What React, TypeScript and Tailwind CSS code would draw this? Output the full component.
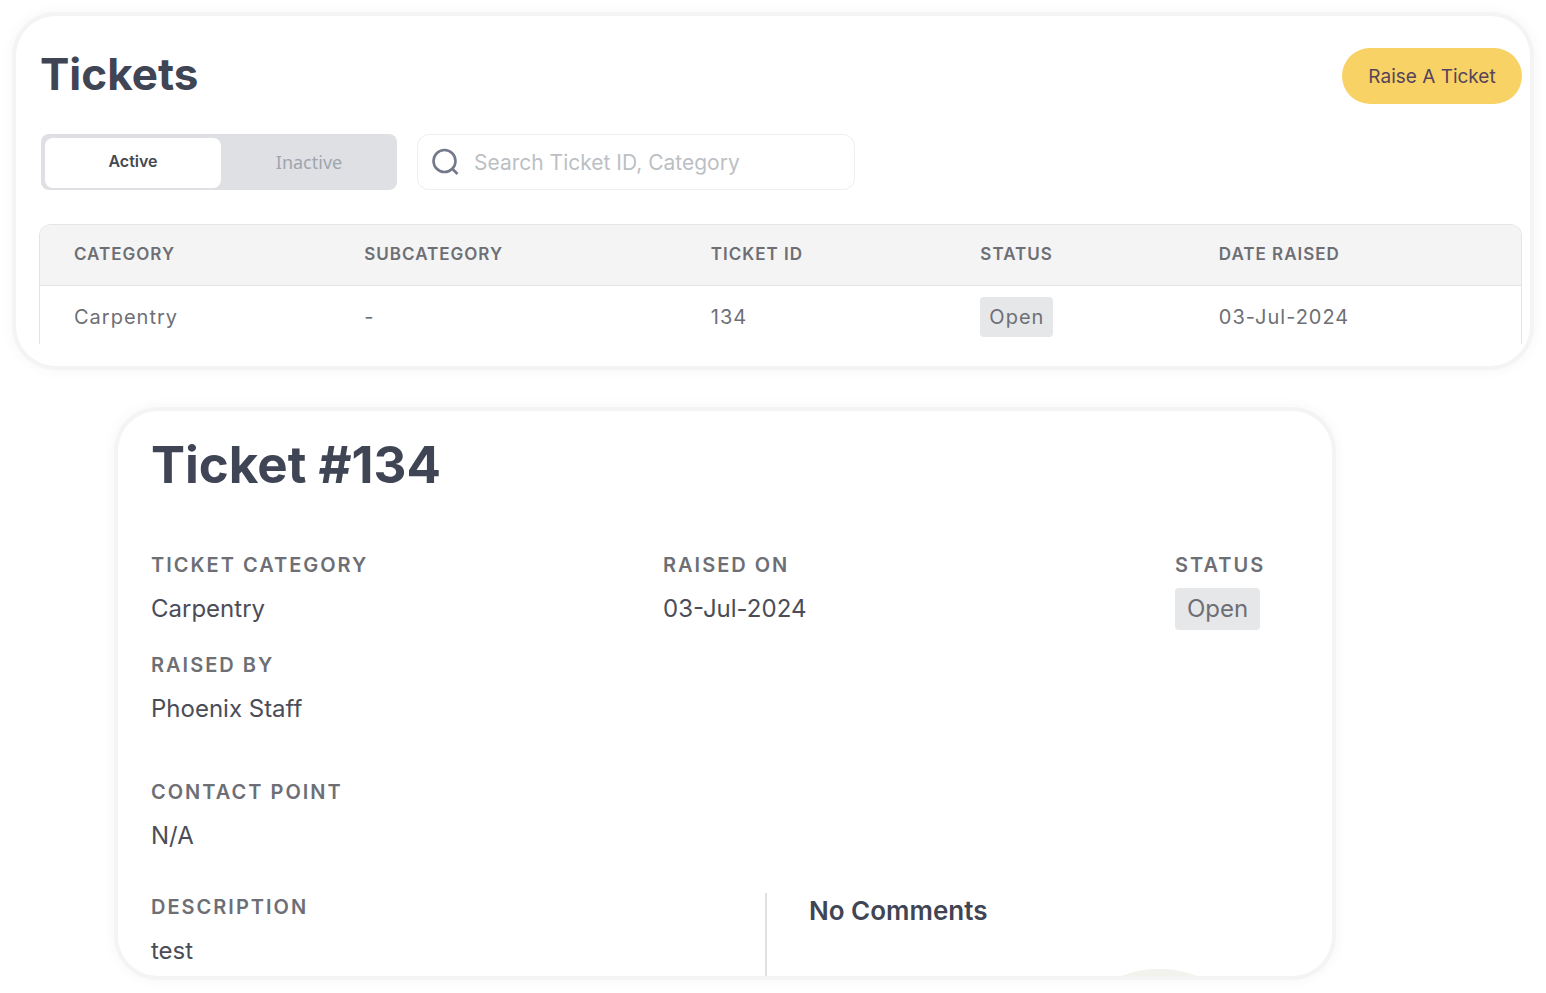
import { ReactNode, useState } from 'react';

const cardClass =
  'rounded-[40px] bg-white shadow-[0_0_0_4px_#f4f4f4,0_0_12px_6px_rgba(0,0,0,0.03)]';

const columns = [
  { label: 'Category', width: 'w-[19.6%]' },
  { label: 'Subcategory', width: 'w-[23.4%]' },
  { label: 'Ticket ID', width: 'w-[18.2%]' },
  { label: 'Status', width: 'w-[16.1%]' },
  { label: 'Date Raised', width: 'w-[22.7%]' },
];

const tickets = [
  { id: '134', category: 'Carpentry', subcategory: '-', status: 'Open', raised: '03-Jul-2024' },
];

function SearchIcon() {
  return (
    <svg
      className="size-7 shrink-0 text-[#73788c]"
      viewBox="0 0 28 28"
      fill="none"
      stroke="currentColor"
      strokeWidth="2.6"
      aria-hidden="true"
    >
      <circle cx="13.5" cy="13" r="11" />
      <path d="M21 20.5 L26.5 26" />
    </svg>
  );
}

function Field({ label, children }: { label: string; children: ReactNode }) {
  return (
    <div>
      <dt className="text-xl leading-7 font-semibold tracking-[2px] text-[#6d6f75] uppercase">
        {label}
      </dt>
      <dd className="mt-[9px] text-2xl leading-[42px] text-[#4a4d57]">{children}</dd>
    </div>
  );
}

function TicketList() {
  const [tab, setTab] = useState<'active' | 'inactive'>('active');

  return (
    <section className={`${cardClass} pt-8 pr-2 pb-[22px] pl-[23px]`}>
      <div className="flex items-start justify-between pl-px">
        <h1 className="text-[44px] leading-[52px] font-bold text-[#3f4554]">Tickets</h1>
        <button
          type="button"
          className="h-14 w-[180px] rounded-full bg-[#f8d264] pt-0.5 text-[19px] text-[#57445a]"
        >
          Raise A Ticket
        </button>
      </div>

      <div className="mt-[30px] flex gap-5 pl-0.5">
        <div className="flex h-14 w-[356px] rounded-lg bg-[#dfe0e4] p-1 pr-0 pb-0.5">
          <button
            type="button"
            onClick={() => setTab('active')}
            aria-pressed={tab === 'active'}
            className="flex-1 rounded-lg bg-white pb-1 text-base font-semibold text-[#454850]"
          >
            Active
          </button>
          <button
            type="button"
            onClick={() => setTab('inactive')}
            aria-pressed={tab === 'inactive'}
            className="flex-1 rounded-lg pb-0.5 font-['Noto_Sans',sans-serif] text-lg text-[#a0a5af]"
          >
            Inactive
          </button>
        </div>
        <label className="flex h-14 w-[438px] items-center gap-[15px] rounded-xl border border-[#e9eff3] px-[13px]">
          <SearchIcon />
          <input
            type="text"
            aria-label="Search tickets"
            placeholder="Search Ticket ID, Category"
            className="min-w-0 flex-1 bg-transparent pt-0.5 text-[21px] text-[#4a4d57] outline-none placeholder:text-[#bcbfc4]"
          />
        </label>
      </div>

      <div className="mt-[34px] overflow-hidden rounded-t-xl border border-b-0 border-[#e2e4e6]">
        <table className="w-full table-fixed text-left">
          <thead className="bg-[#f4f4f4]">
            <tr className="h-[60px] border-b border-[#e2e4e6]">
              {columns.map((column) => (
                <th
                  key={column.label}
                  className={`${column.width} pl-[34px] text-[17px] font-semibold tracking-[1px] text-[#6d6f75] uppercase`}
                >
                  {column.label}
                </th>
              ))}
            </tr>
          </thead>
          <tbody>
            {tickets.map((ticket) => (
              <tr key={ticket.id} className="h-[59px] text-xl tracking-[1px] text-[#6d6f75] [&>td]:pt-1 [&>td]:pl-[34px]">
                <td>{ticket.category}</td>
                <td>{ticket.subcategory}</td>
                <td>{ticket.id}</td>
                <td>
                  <span className="inline-block rounded bg-[#e6e7e9] px-[9px] leading-10">{ticket.status}</span>
                </td>
                <td>{ticket.raised}</td>
              </tr>
            ))}
          </tbody>
        </table>
      </div>
    </section>
  );
}

function TicketDetail() {
  return (
    <section className={`${cardClass} mt-[45px] mr-[198px] ml-[102px] overflow-hidden pt-6 pl-[33px]`}>
      <h2 className="text-[51px] leading-[60px] font-bold text-[#3f4554]">Ticket #134</h2>

      <dl className="mt-14 grid grid-cols-[512fr_512fr_157fr]">
        <Field label="Ticket Category">Carpentry</Field>
        <Field label="Raised On">03-Jul-2024</Field>
        <Field label="Status">
          <span className="inline-block rounded bg-[#e6e7e9] px-3 leading-[42px] text-[#6d6f75]">Open</span>
        </Field>
      </dl>

      <dl className="mt-[21px]">
        <Field label="Raised By">Phoenix Staff</Field>
      </dl>
      <dl className="mt-12">
        <Field label="Contact Point">N/A</Field>
      </dl>

      <div className="mt-9 grid grid-cols-[614fr_567fr]">
        <dl className="pb-1">
          <Field label="Description">test</Field>
        </dl>
        <div className="flex flex-col justify-between border-l-2 border-[#dfe0e4] pt-0.5 pl-[42px]">
          <h3 className="text-[26px] leading-8 font-semibold text-[#3f4554]">No Comments</h3>
          {/* top edge of the empty state illustration */}
          <svg className="ml-[312px] h-[7px] w-[76px]" viewBox="0 0 76 7" aria-hidden="true">
            <path d="M0 7 A104 104 0 0 1 76 7 Z" fill="#f3f3ee" />
          </svg>
        </div>
      </div>
    </section>
  );
}

export default function App() {
  return (
    <main className="min-h-screen bg-white p-4 font-['Inter','Liberation_Sans',sans-serif]">
      <TicketList />
      <TicketDetail />
    </main>
  );
}
